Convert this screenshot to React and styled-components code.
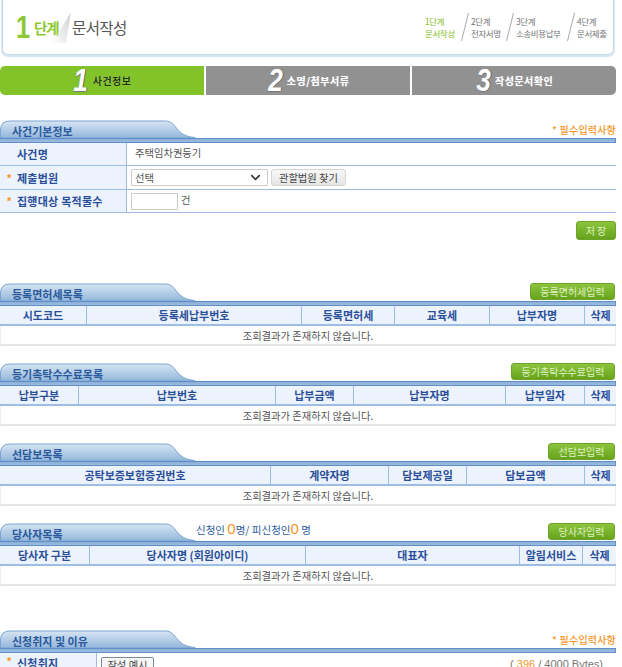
import React from 'react';
import styled, { createGlobalStyle } from 'styled-components';
import { ChevronDown } from 'lucide-react';

const Global = createGlobalStyle`
  html, body { margin: 0; padding: 0; background: #fff; overflow: hidden; height: 667px; }
  body { font-family: "Noto Sans CJK KR", "Noto Sans", sans-serif; font-size: 11px; color: #555; }
  * { box-sizing: border-box; }
`;
const Page = styled.div`width: 616px; height: 667px; overflow: hidden;`;

const Header = styled.header`
  height: 55px; margin: 0 0 11px 2px; width: 612px; padding: 0 7px 0 13px;
  border: 1px solid #c3d8e8; border-radius: 0 0 6px 6px; border-top: 0;
  box-shadow: 0 1px 1px 1px #d6e4ee;
  display: flex; align-items: center; justify-content: space-between;
`;
const Heading = styled.div`display: flex; align-items: center; position: relative; height: 100%;`;
const BigOne = styled.span`
  font: bold 31px/1 "Liberation Sans", sans-serif; color: #8cc832; transform: scaleX(.82); transform-origin: left; width: 18px;
`;
const StepWord = styled.span`font-size: 14.5px; font-weight: 700; color: #8cc832; letter-spacing: -1.2px; width: 38px;`;
const PageName = styled.span`font-size: 15.5px; color: #555; letter-spacing: -.6px;`;
const Fold = styled.svg`position: absolute; left: 36px; top: 12px; width: 36px; height: 32px;`;
const Steps = styled.ol`display: flex; list-style: none; margin: 0; padding: 0; align-items: center;`;
const StepItem = styled.li`
  display: flex; flex-direction: column; align-items: flex-start; font-size: 8.5px; line-height: 12px; letter-spacing: -.4px;
  color: ${p => p.$on ? '#84c028' : '#777'};
  width: ${p => p.$w}px; white-space: nowrap;
`;
const StepSlash = styled.svg`width: 8px; height: 30px; margin: 0 2px 0 7px;`;

const Tabs = styled.nav`display: flex; gap: 2px; height: 29px; margin-bottom: 25px;`;
const Tab = styled.div`
  flex: 1; display: flex; align-items: center; justify-content: center; gap: 3px;
  background: ${p => p.$on ? '#82c32a' : '#919191'};
  color: ${p => p.$on ? '#1d3508' : '#fff'};
  &:first-child { border-radius: 5px 0 0 5px; }
  &:last-child { border-radius: 0 5px 5px 0; }
`;
const TabNum = styled.b`
  font: italic bold 31px/1 "Liberation Sans", sans-serif; color: #fff; text-shadow: 1px 0 0 #666, 0 1px 0 #777;
  transform: scaleX(.85);
`;
const TabText = styled.span`font-size: 10px; font-weight: 700; letter-spacing: .5px; text-shadow: 0 0 1px rgba(255,255,255,.5);`;

const Section = styled.section`margin-bottom: ${p => p.$mb ?? 17}px;`;
const HeadRow = styled.div`
  position: relative; height: 18px; display: flex; justify-content: space-between; align-items: flex-start;
`;
const TabShape = styled.svg`position: absolute; left: 0; top: 0; width: 196px; height: 18px;`;
const Title = styled.h2`
  position: relative; margin: 0; padding: 3px 0 0 12px; width: 196px; flex: none;
  font-size: 11px; line-height: 16px; font-weight: 700; color: #2a5a9c;
`;
const Bar = styled.div`
  height: 5px; border: 1px solid #5f8fc9; border-left: 0; background: linear-gradient(#8db0d9, #9cbbdd);
`;
const Required = styled.span`font-size: 10px; line-height: 14px; font-weight: 500; color: #f7941d; margin-top: 3px; letter-spacing: .2px;`;
const GreenBtn = styled.button`
  height: 17px; width: ${p => p.$w}px; margin-right: ${p => p.$mr ?? 1}px; padding: 0;
  font: 10px/15px "Noto Sans CJK KR", sans-serif; color: #dff0c4;
  background: linear-gradient(#8cc43c, #66a31c); border: 1px solid #6da42a; border-radius: 3px;
`;
const Count = styled.span`
  position: absolute; left: 196px; top: -3px; font-size: 10.5px; line-height: 18px; color: #2a5a9c; white-space: pre;
`;
const Zero = styled.b`font: 15px "Liberation Sans", sans-serif; color: #f7941d;`;

const FormRow = styled.div`
  display: grid; grid-template-columns: ${p => p.$label ?? 127}px 1fr; height: ${p => p.$h}px; border-bottom: 1px solid #9dbce8;
`;
const Label = styled.div`
  display: flex; align-items: ${p => p.$top ? 'flex-start' : 'center'}; background: #edf3fc; border-right: 1px solid #9dbce8;
  padding-left: ${p => p.$star ? 7 : 17}px; padding-top: ${p => p.$top ? 2 : 0}px;
  font-weight: 700; color: #2a4f9a; letter-spacing: .25px; white-space: nowrap;
`;
const Star = styled.i`font: bold 11px "Liberation Sans", sans-serif; color: #f7941d; width: 10px;`;
const Field = styled.div`
  display: flex; align-items: ${p => p.$top ? 'flex-start' : 'center'}; padding-left: 4px; padding-top: ${p => p.$top ? 4 : 0}px;
  gap: 3px; color: #555; font-size: 10.3px;
`;
const PlainText = styled.span`padding: 0 0 3px 4px;`;
const SelectBox = styled.div`position: relative; width: 137px; height: 17px;`;
const Select = styled.select`
  appearance: none; width: 100%; height: 100%; font: 10.3px "Noto Sans CJK KR", sans-serif; color: #555; padding: 0 0 0 3px;
  border: 1px solid #ccc; background: #fff; border-radius: 1px;
`;
const Chevron = styled(ChevronDown)`position: absolute; right: 5px; top: 1px; width: 15px; height: 15px; color: #333; pointer-events: none;`;
const GrayBtn = styled.button`
  width: 75px; height: 17px; padding: 0; font: 10.3px/15px "Noto Sans CJK KR", sans-serif; color: #444;
  background: linear-gradient(#f8f8f8, #e6e6e6); border: 1px solid #d5d5d5; border-radius: 3px;
`;
const NumInput = styled.input`width: 47px; height: 17px; border: 1px solid #ccc; padding: 0;`;
const Unit = styled.span`margin-bottom: 3px;`;
const SaveRow = styled.div`display: flex; justify-content: flex-end; margin-top: 8px; height: 62px;`;
const SaveBtn = styled(GreenBtn)`height: 19px; margin: 0;`;

const Grid = styled.div`display: grid; grid-template-columns: ${p => p.$cols};`;
const Th = styled.div`
  height: 20px; display: flex; align-items: center; justify-content: center; padding-bottom: 1px;
  background: #edf3fc; border-right: 1px solid #9dbce8; border-bottom: 2px solid #9dbce8;
  font-weight: 700; color: #2a4f9a; white-space: pre;
  &:nth-last-child(2) { border-right: 0; }
`;
const Empty = styled.div`
  grid-column: 1 / -1; height: 20px; display: flex; align-items: center; justify-content: center; font-size: 10.3px;
  border-bottom: 2px solid #e6e6e6; border-left: 1px solid #eee; border-right: 1px solid #eee; color: #555;
`;
const ExampleBtn = styled.button`
  height: 16px; width: 53px; padding: 0; font: 10.3px/14px "Noto Sans CJK KR", sans-serif; color: #444;
  background: #f7f7f7; border: 1px solid #7a8ba0; border-radius: 2px;
`;
const Bytes = styled.div`
  flex: 1; display: flex; justify-content: flex-end; padding: 1px 13px 0 0; color: #777; font: 11px "Liberation Sans", sans-serif; white-space: pre;
`;
const Orange = styled.span`color: #f7941d;`;
const Spacer = styled.div`height: ${p => p.$h}px;`;

const SectionHead = ({ title, children }) => {
  const id = React.useId();
  return (
    <>
      <HeadRow>
        <TabShape viewBox="0 0 196 18" aria-hidden="true">
          <defs>
            <linearGradient id={id} x1="0" y1="0" x2="0" y2="1">
              <stop offset="0" stopColor="#d6e5f4" />
              <stop offset="1" stopColor="#94b6da" />
            </linearGradient>
          </defs>
          <path d="M.5 18V10Q.5 1 10 1H165C178 1 174 16 195 17.5V18Z" fill={`url(#${id})`} stroke="#7ba5d2" />
        </TabShape>
        <Title>{title}</Title>
        {children}
      </HeadRow>
      <Bar />
    </>
  );
};

const ListTable = ({ cols, heads }) => (
  <Grid $cols={cols}>
    {heads.map(h => <Th key={h}>{h}</Th>)}
    <Empty>조회결과가 존재하지 않습니다.</Empty>
  </Grid>
);

const Slash = () => (
  <StepSlash viewBox="0 0 8 30" aria-hidden="true"><path d="M7.5 1L.5 29" stroke="#aaa" fill="none" /></StepSlash>
);

export default function App() {
  return (
    <Page>
      <Global />
      <Header>
        <Heading>
          <BigOne>1</BigOne>
          <StepWord>단계</StepWord>
          <Fold viewBox="0 0 36 32" aria-hidden="true">
            <defs>
              <linearGradient id="fold" x1="1" y1="0" x2="0" y2="1">
                <stop offset="0" stopColor="#bbb" />
                <stop offset="1" stopColor="#fff" />
              </linearGradient>
            </defs>
            <path d="M19 0L0 31H14Z" fill="url(#fold)" opacity=".7" />
          </Fold>
          <PageName>문서작성</PageName>
        </Heading>
        <Steps>
          <StepItem $on $w={29}><span>1단계</span><span>문서작성</span></StepItem>
          <Slash />
          <StepItem $w={28}><span>2단계</span><span>전자서명</span></StepItem>
          <Slash />
          <StepItem $w={44}><span>3단계</span><span>소송비용납부</span></StepItem>
          <Slash />
          <StepItem $w={29}><span>4단계</span><span>문서제출</span></StepItem>
        </Steps>
      </Header>

      <Tabs>
        <Tab $on><TabNum>1</TabNum><TabText>사건정보</TabText></Tab>
        <Tab><TabNum>2</TabNum><TabText>소명/첨부서류</TabText></Tab>
        <Tab><TabNum>3</TabNum><TabText>작성문서확인</TabText></Tab>
      </Tabs>

      <Section $mb={0}>
        <SectionHead title="사건기본정보"><Required>* 필수입력사항</Required></SectionHead>
        <FormRow $h={23}><Label>사건명</Label><Field><PlainText>주택임차권등기</PlainText></Field></FormRow>
        <FormRow $h={24}>
          <Label $star><Star>*</Star>제출법원</Label>
          <Field>
            <SelectBox>
              <Select defaultValue="선택"><option>선택</option></Select>
              <Chevron strokeWidth={2.5} aria-hidden="true" />
            </SelectBox>
            <GrayBtn>관할법원 찾기</GrayBtn>
          </Field>
        </FormRow>
        <FormRow $h={23}>
          <Label $star><Star>*</Star>집행대상 목적물수</Label>
          <Field><NumInput /><Unit>건</Unit></Field>
        </FormRow>
        <SaveRow><SaveBtn $w={40}>저 장</SaveBtn></SaveRow>
      </Section>

      <Section>
        <SectionHead title="등록면허세목록"><GreenBtn $w={85}>등록면허세입력</GreenBtn></SectionHead>
        <ListTable cols="87px 215px 93px 95px 95px 31px" heads={['시도코드', '등록세납부번호', '등록면허세', '교육세', '납부자명', '삭제']} />
      </Section>

      <Section>
        <SectionHead title="등기촉탁수수료목록"><GreenBtn $w={104}>등기촉탁수수료입력</GreenBtn></SectionHead>
        <ListTable cols="79px 197px 78px 152px 79px 31px" heads={['납부구분', '납부번호', '납부금액', '납부자명', '납부일자', '삭제']} />
      </Section>

      <Section>
        <SectionHead title="선담보목록"><GreenBtn $w={67}>선담보입력</GreenBtn></SectionHead>
        <ListTable cols="271px 118px 78px 118px 31px" heads={['공탁보증보험증권번호', '계약자명', '담보제공일', '담보금액', '삭제']} />
      </Section>

      <Section $mb={0}>
        <SectionHead title="당사자목록">
          <Count>신청인 <Zero>0</Zero>명/ 피신청인<Zero>0</Zero> 명</Count>
          <GreenBtn $w={67}>당사자입력</GreenBtn>
        </SectionHead>
        <ListTable cols="90px 216px 214px 63px 33px" heads={['당사자 구분', '당사자명 (회원아이디)', '대표자', '알림서비스', '삭제']} />
      </Section>

      <Spacer $h={44} />

      <Section $mb={0}>
        <SectionHead title="신청취지 및 이유"><Required>* 필수입력사항</Required></SectionHead>
        <FormRow $h={40} $label={97}>
          <Label $star $top><Star>*</Star>신청취지</Label>
          <Field $top>
            <ExampleBtn>작성 예시</ExampleBtn>
            <Bytes>( <Orange>396</Orange> / 4000 Bytes)</Bytes>
          </Field>
        </FormRow>
      </Section>
    </Page>
  );
}
